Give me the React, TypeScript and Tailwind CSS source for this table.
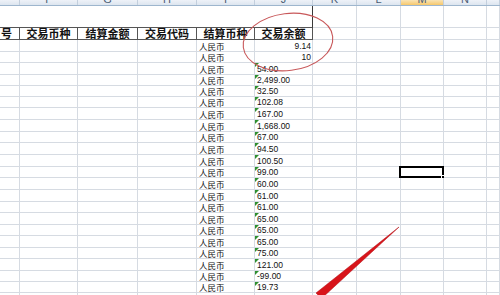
import React from "react";

const colLetters = ["", "F", "G", "H", "I", "J", "K", "L", "M", "N", ""];

const heads = ["号", "交易币种", "结算金额", "交易代码", "结算币种", "交易余额"];

const amounts = [
  "9.14", "10", "54.00", "2,499.00", "32.50", "102.08", "167.00", "1,668.00",
  "67.00", "94.50", "100.50", "99.00", "60.00", "61.00", "61.00", "65.00",
  "65.00", "65.00", "75.00", "121.00", "-99.00", "19.73",
];

const rowH = [
  "h-[12px]", "h-[11px]", "h-[12px]", "h-[11px]", "h-[11px]", "h-[11px]",
  "h-[12px]", "h-[12px]", "h-[11px]", "h-[12px]", "h-[12px]", "h-[11px]",
  "h-[12px]", "h-[12px]", "h-[11px]", "h-[12px]", "h-[11px]", "h-[12px]",
  "h-[11px]", "h-[12px]", "h-[11px]", "h-[11px]",
];

const gridCols =
  "grid grid-cols-[20px_58px_60px_59px_58px_58px_44px_44px_43px_43px_13px]";

const cjk = "font-['Noto_Sans_CJK_SC','Noto_Sans',sans-serif]";
const num = "font-['Liberation_Sans',Arial,sans-serif]";

export default function App() {
  return (
    <div className="relative w-[500px] h-[295px] overflow-hidden bg-white">
      {/* column letters, only their lower part shows */}
      <div className={`${gridCols} h-[6px] border-b border-[#9eb6ce]`}>
        {colLetters.map((c, i) => (
          <div
            key={i}
            className={`h-[5px] overflow-hidden border-r border-[#c3cfdd] text-center ${num} text-[11px] leading-[11px] text-[#4c5d75] ${
              c === "M"
                ? "bg-gradient-to-b from-[#f9e3b4] to-[#f6c86a]"
                : "bg-gradient-to-b from-[#eef2f8] to-[#dde5ef]"
            }`}
          >
            <div className="-mt-[6px]">{c}</div>
          </div>
        ))}
      </div>

      {/* title row (merged) */}
      <div className={`${gridCols} h-[22px]`}>
        <div className="col-span-6 border-r border-r-[#3a3a3a] border-b border-b-[#555]" />
        {[0, 1, 2, 3, 4].map((i) => (
          <div key={i} className="border-r border-b border-[#d6dbe2]" />
        ))}
      </div>

      {/* header row */}
      <div className={`${gridCols} h-[12px]`}>
        {heads.map((h, i) => (
          <div
            key={i}
            className={`flex items-center overflow-hidden whitespace-nowrap border-r border-b border-[#555] ${cjk} text-[11px] leading-none font-semibold text-[#111] ${
              i === 0 ? "justify-start pl-[1px]" : "justify-center"
            }`}
          >
            {h}
          </div>
        ))}
        {[0, 1, 2, 3, 4].map((i) => (
          <div key={i} className="border-r border-b border-[#d6dbe2]" />
        ))}
      </div>

      {/* data rows */}
      {amounts.map((a, r) => (
        <div key={r} className={`${gridCols} ${rowH[r]}`}>
          {colLetters.map((_, c) => (
            <div
              key={c}
              className={`relative flex items-end overflow-visible whitespace-nowrap border-r border-b border-[#d6dbe2] text-[#111] ${
                c === 4 ? `${cjk} text-[8.5px] leading-[10px] pl-[2px]` : ""
              } ${
                c === 5
                  ? `${num} text-[8.5px] leading-[10px] ${
                      r < 2 ? "justify-end pr-[1px]" : "pl-[2px]"
                    }`
                  : ""
              }`}
            >
              {c === 4 && "人民币"}
              {c === 5 && a}
              {c === 5 && r >= 2 && (
                <span className="absolute left-0 top-0 h-0 w-0 border-t-[4px] border-t-[#2f8f2f] border-r-[4px] border-r-transparent" />
              )}
              {c === 8 && r === 11 && (
                <span className="absolute -left-[2px] -top-[1px] -right-[1px] -bottom-[1px] border-2 border-black">
                  <span className="absolute -right-[3px] -bottom-[3px] h-[4px] w-[4px] bg-black border border-white" />
                </span>
              )}
            </div>
          ))}
        </div>
      ))}
      <div className={`${gridCols} h-[12px]`}>
        {colLetters.map((_, c) => (
          <div key={c} className="border-r border-[#d6dbe2]" />
        ))}
      </div>

      {/* annotations: circle and arrow */}
      <svg
        className="pointer-events-none absolute left-0 top-0"
        width="500"
        height="295"
        viewBox="0 0 500 295"
      >
        <ellipse
          cx="288"
          cy="42"
          rx="45"
          ry="28.5"
          transform="rotate(-7 288 42)"
          fill="none"
          stroke="#c8585a"
          strokeWidth="1.1"
        />
        <polygon
          points="399,227 321.5,298.5 316,293"
          fill="#d8141a"
          stroke="#b00d12"
          strokeWidth="0.5"
        />
      </svg>
    </div>
  );
}
